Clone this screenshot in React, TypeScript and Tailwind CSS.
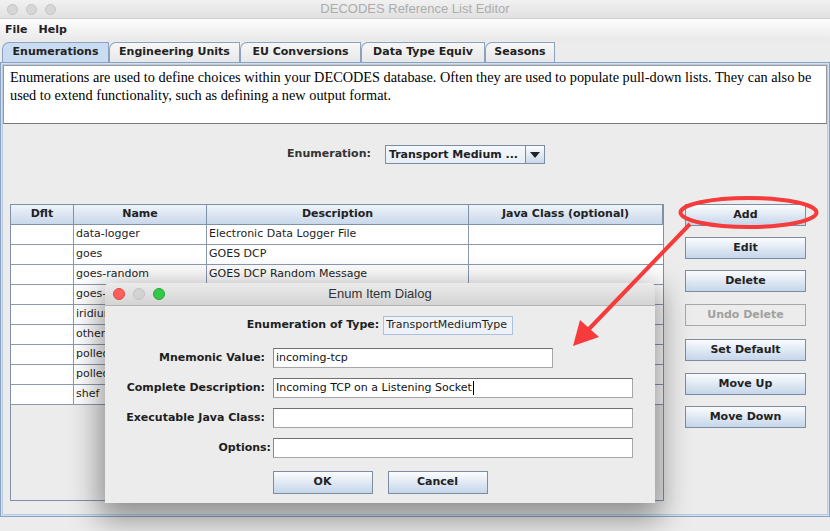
const ui = "font-['DejaVu_Sans',sans-serif]"

type Row = { name: string; desc: string }

// rows below "goes-random" sit under the dialog, so their descriptions are not visible
const rows: Row[] = [
  { name: 'data-logger', desc: 'Electronic Data Logger File' },
  { name: 'goes', desc: 'GOES DCP' },
  { name: 'goes-random', desc: 'GOES DCP Random Message' },
  { name: 'goes-self-timed', desc: '' },
  { name: 'iridium', desc: '' },
  { name: 'other', desc: '' },
  { name: 'polled-modem', desc: '' },
  { name: 'polled-tcp', desc: '' },
  { name: 'shef', desc: '' },
]

const tabs = [
  { label: 'Enumerations', w: 'w-[107px]', active: true },
  { label: 'Engineering Units', w: 'w-[131px]', active: false },
  { label: 'EU Conversions', w: 'w-[121px]', active: false },
  { label: 'Data Type Equiv', w: 'w-[124px]', active: false },
  { label: 'Seasons', w: 'w-[70px]', active: false },
]

const buttons = [
  { label: 'Add', mt: 'mt-0', disabled: false },
  { label: 'Edit', mt: 'mt-[11px]', disabled: false },
  { label: 'Delete', mt: 'mt-[11px]', disabled: false },
  { label: 'Undo Delete', mt: 'mt-[12px]', disabled: true },
  { label: 'Set Default', mt: 'mt-[13px]', disabled: false },
  { label: 'Move Up', mt: 'mt-[12px]', disabled: false },
  { label: 'Move Down', mt: 'mt-[11px]', disabled: false },
]

function Lights({ active }: { active: boolean }) {
  if (!active) {
    return (
      <div className="flex gap-[8px]">
        <span className="h-[11px] w-[11px] rounded-full border border-[#c4c4c4] bg-[#d6d6d6]" />
        <span className="h-[11px] w-[11px] rounded-full border border-[#c4c4c4] bg-[#d6d6d6]" />
        <span className="h-[11px] w-[11px] rounded-full border border-[#c4c4c4] bg-[#d6d6d6]" />
      </div>
    )
  }
  return (
    <div className="flex gap-[8px]">
      <span className="h-[12px] w-[12px] rounded-full border border-[#e2463f] bg-[#fc605c]" />
      <span className="h-[12px] w-[12px] rounded-full border border-[#c2c2c2] bg-[#d3d3d3]" />
      <span className="h-[12px] w-[12px] rounded-full border border-[#24a732] bg-[#34c84a]" />
    </div>
  )
}

function TextField({ value, w, caret }: { value?: string; w: string; caret?: boolean }) {
  return (
    <div
      className={`flex h-[20px] ${w} items-center border border-[#a6a6a6] border-t-[#707070] border-l-[#8a8a8a] bg-white px-[2px] text-[11px] text-[#111]`}
    >
      {value}
      {caret && <span className="ml-px inline-block h-[14px] w-px bg-black" />}
    </div>
  )
}

function EnumDialog() {
  return (
    <div className="absolute left-[105px] top-[283px] h-[220px] w-[550px] overflow-hidden rounded-t-[5px] bg-[#ececec] shadow-[0_10px_30px_6px_rgba(0,0,0,0.4)]">
      <div className="relative flex h-[23px] items-center border-b border-[#b4b4b4] bg-linear-to-b from-[#ebebeb] to-[#d4d4d4] pl-[8px]">
        <Lights active />
        <span className="absolute inset-x-0 text-center font-['Liberation_Sans',sans-serif] text-[13px] text-[#333]">
          Enum Item Dialog
        </span>
      </div>

      <div className="mt-[10px] flex items-center justify-center gap-[4px]">
        <span className="font-bold">Enumeration of Type:</span>
        <div className="flex h-[19px] w-[130px] items-center overflow-hidden whitespace-nowrap border border-[#a9c3de] bg-[#eef2f7] px-[2px]">
          TransportMediumType
        </div>
      </div>

      <div className="mt-[13px] grid grid-cols-[168px_auto] gap-y-[10px]">
        <span className="self-center pr-[8px] text-right font-bold">Mnemonic Value:</span>
        <TextField value="incoming-tcp" w="w-[280px]" />
        <span className="self-center pr-[8px] text-right font-bold">Complete Description:</span>
        <TextField value="Incoming TCP on a Listening Socket" w="w-[360px]" caret />
        <span className="self-center pr-[8px] text-right font-bold">Executable Java Class:</span>
        <TextField w="w-[360px]" />
        <span className="self-center pr-[2px] text-right font-bold">Options:</span>
        <TextField w="w-[360px]" />
      </div>

      <div className="mt-[13px] flex justify-center gap-[15px]">
        <button className="h-[23px] w-[100px] border border-[#7d8ca0] bg-linear-to-b from-[#fbfcfe] to-[#c5d6ea] font-bold text-[#222]">
          OK
        </button>
        <button className="h-[23px] w-[100px] border border-[#7d8ca0] bg-linear-to-b from-[#fbfcfe] to-[#c5d6ea] font-bold text-[#222]">
          Cancel
        </button>
      </div>
    </div>
  )
}

export default function App() {
  return (
    <div className={`relative h-[531px] w-[830px] overflow-hidden bg-[#ececec] ${ui} text-[11px] text-[#1e1e1e]`}>
      {/* window title */}
      <div className="relative flex h-[19px] items-center border-b border-[#cdcdcd] bg-linear-to-b from-[#f1f1f1] to-[#e1e1e1] pl-[7px]">
        <Lights active={false} />
        <span className="absolute inset-x-0 text-center font-['Liberation_Sans',sans-serif] text-[13px] text-[#acacac]">
          DECODES Reference List Editor
        </span>
      </div>

      {/* menu */}
      <div className="flex h-[22px] items-center gap-[11px] bg-linear-to-b from-[#fdfdfd] to-[#e9e9e9] pl-[5px] font-bold text-[#222]">
        <span>File</span>
        <span>Help</span>
      </div>

      {/* tabs */}
      <div className="flex h-[21px] items-end pl-[2px]">
        {tabs.map((t) => (
          <div
            key={t.label}
            className={`flex h-[20px] ${t.w} items-center justify-center rounded-tl-[7px] border border-b-0 border-[#8aa2c0] font-bold text-[#222] ${
              t.active ? 'bg-[#cadcf1]' : 'bg-linear-to-b from-[#f7f7f7] to-[#e8e8e8]'
            }`}
          >
            {t.label}
          </div>
        ))}
      </div>

      {/* tab panel */}
      <div className="h-[455px] border border-[#8aa2c0] bg-[#d3e2f2] p-[1px]">
        <div className="flex h-full flex-col border border-[#b8cbe0] bg-[#ececec]">
          <div className="h-[59px] border border-[#9a9a9a] border-b-[#7a7a7a] bg-white px-[6px] pt-[2px] font-['Liberation_Serif',serif] text-[14.3px] leading-[18px] whitespace-nowrap text-black">
            Enumerations are used to define choices within your DECODES database. Often they are used to populate pull-down lists. They can also be
            <br />
            used to extend functionality, such as defining a new output format.
          </div>

          <div className="mt-[21px] flex items-center justify-center gap-[14px] pl-[2px]">
            <span className="font-bold text-[#333]">Enumeration:</span>
            <div className="flex h-[19px] w-[160px] border border-[#7b8ca3] bg-linear-to-b from-[#f6f9fc] to-[#e6edf6]">
              <span className="flex-1 truncate pl-[3px] font-bold leading-[17px] text-[#222]">
                Transport Medium ...
              </span>
              <span className="flex w-[19px] items-center justify-center border-l border-[#7b8ca3] bg-linear-to-b from-[#fbfcfe] to-[#c8d8ea]">
                <span className="h-0 w-0 border-x-[5px] border-t-[6px] border-x-transparent border-t-[#222]" />
              </span>
            </div>
          </div>

          <div className="mt-[40px] flex pl-[7px]">
            <div className="h-[297px] w-[654px] border border-[#7f91a7] bg-[#ececec]">
              <div className="grid grid-cols-[63px_133px_262px_194px]">
                {['Dflt', 'Name', 'Description', 'Java Class (optional)'].map((h) => (
                  <div
                    key={h}
                    className="flex h-[20px] items-center justify-center border-r border-b border-[#7f91a7] bg-linear-to-b from-[#eef3f9] to-[#c9d8ea] font-bold text-[#222] last:border-r-0"
                  >
                    {h}
                  </div>
                ))}
                {rows.map((r) => (
                  <div key={r.name} className="contents">
                    <div className="h-[20px] border-r border-b border-[#8a9ab0] bg-white" />
                    <div className="flex h-[20px] items-center overflow-hidden whitespace-nowrap border-r border-b border-[#8a9ab0] bg-white pl-[2px]">
                      {r.name}
                    </div>
                    <div className="flex h-[20px] items-center overflow-hidden whitespace-nowrap border-r border-b border-[#8a9ab0] bg-white pl-[2px]">
                      {r.desc}
                    </div>
                    <div className="h-[20px] border-b border-[#8a9ab0] bg-white" />
                  </div>
                ))}
              </div>
            </div>

            <div className="ml-[21px] flex w-[121px] flex-col">
              {buttons.map((b) => (
                <button
                  key={b.label}
                  className={`${b.mt} h-[22px] w-[121px] border font-bold ${
                    b.disabled
                      ? 'border-[#a8a8a8] bg-[#ececec] text-[#a0a0a0]'
                      : 'border-[#7d8ca0] bg-linear-to-b from-[#fbfcfe] to-[#c5d6ea] text-[#222]'
                  }`}
                >
                  {b.label}
                </button>
              ))}
            </div>
          </div>
        </div>
      </div>

      <EnumDialog />

      {/* annotation */}
      <svg className="pointer-events-none absolute left-0 top-0" width="830" height="531" viewBox="0 0 830 531">
        <ellipse cx="748.5" cy="212.5" rx="68" ry="14.5" fill="none" stroke="#f53b3b" strokeWidth="4" />
        <line x1="690" y1="224" x2="588" y2="330" stroke="#f53b3b" strokeWidth="4" />
        <polygon points="573,346 580,320 599,337" fill="#f53b3b" />
      </svg>
    </div>
  )
}
